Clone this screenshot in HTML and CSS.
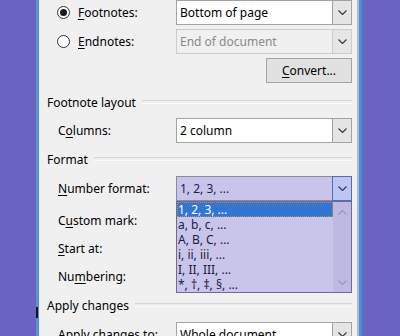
FILE: index.html
```html
<!DOCTYPE html>
<html lang="en">
<head>
  <meta charset="UTF-8">
  <title>Footnote and Endnote</title>
  <link rel="stylesheet" href="styles.css">
</head>
<body>
  <div class="frame">
    <div class="dialog">

      <div class="row">
        <label class="option"><span class="radio checked"></span><u>F</u>ootnotes:</label>
        <div class="select">
          <span class="value">Bottom of page</span>
          <span class="arrow"><svg width="9" height="5" viewBox="0 0 9 5"><polyline points="0.5,0.5 4.5,4.5 8.5,0.5" /></svg></span>
        </div>
      </div>

      <div class="row gap4">
        <label class="option"><span class="radio"></span><u>E</u>ndnotes:</label>
        <div class="select disabled">
          <span class="value">End of document</span>
          <span class="arrow"><svg width="9" height="5" viewBox="0 0 9 5"><polyline points="0.5,0.5 4.5,4.5 8.5,0.5" /></svg></span>
        </div>
      </div>

      <div class="row gap4">
        <button class="btn"><u>C</u>onvert...</button>
      </div>

      <div class="group-title first">Footnote layout</div>

      <div class="row gap7">
        <label>C<u>o</u>lumns:</label>
        <div class="select">
          <span class="value">2 column</span>
          <span class="arrow"><svg width="9" height="5" viewBox="0 0 9 5"><polyline points="0.5,0.5 4.5,4.5 8.5,0.5" /></svg></span>
        </div>
      </div>

      <div class="group-title">Format</div>

      <div class="row gap8">
        <label><u>N</u>umber format:</label>
        <div class="dropdown">
          <div class="select active">
            <span class="value">1, 2, 3, ...</span>
            <span class="arrow"><svg width="9" height="5" viewBox="0 0 9 5"><polyline points="0.5,0.5 4.5,4.5 8.5,0.5" /></svg></span>
          </div>
          <div class="list">
            <div class="items">
              <div class="item sel">1, 2, 3, ...</div>
              <div class="item">a, b, c, ...</div>
              <div class="item">A, B, C, ...</div>
              <div class="item">i, ii, iii, ...</div>
              <div class="item">I, II, III, ...</div>
              <div class="item">*, †, ‡, §, ...</div>
            </div>
            <div class="scroll">
              <svg width="9" height="5" viewBox="0 0 9 5"><polyline points="0.5,4.5 4.5,0.5 8.5,4.5" /></svg>
              <svg width="9" height="5" viewBox="0 0 9 5"><polyline points="0.5,0.5 4.5,4.5 8.5,0.5" /></svg>
            </div>
          </div>
        </div>
      </div>

      <div class="row gap7">
        <label>C<u>u</u>stom mark:</label>
      </div>

      <div class="row gap3">
        <label><u>S</u>tart at:</label>
      </div>

      <div class="row gap3">
        <label>Nu<u>m</u>bering:</label>
      </div>

      <div class="group-title">Apply changes</div>

      <div class="row gap8">
        <label>A<u>p</u>ply changes to:</label>
        <div class="select">
          <span class="value">Whole document</span>
          <span class="arrow"><svg width="9" height="5" viewBox="0 0 9 5"><polyline points="0.5,0.5 4.5,4.5 8.5,0.5" /></svg></span>
        </div>
      </div>

    </div>
  </div>
</body>
</html>
```

FILE: styles.css
```css
:root {
  --fundo: #6b63c1;
  --janela: #f0f0f0;
  --azul: #3d96e2;
  --borda: #a3a3a3;
  --lilas: #c9c5ea;
  --lilas2: #bdb9e1;
}

* {
  box-sizing: border-box;
  margin: 0;
  padding: 0;
}

body {
  background-color: var(--fundo);
  width: 400px;
  height: 336px;
  overflow: hidden;
  font-family: 'Noto Sans', 'DejaVu Sans', sans-serif;
  font-size: 12px;
  color: #000;
}

u {
  text-underline-offset: 2px;
}

.frame {
  position: relative;
  margin-left: 36px;
  width: 326px;
  height: 336px;
  border-left: 1px solid #8e8ba6;
  border-right: 3px solid var(--azul);
}

/* little dark mark on the left edge */
.frame::before {
  content: "";
  position: absolute;
  left: -1px;
  top: 307px;
  width: 2px;
  height: 11px;
  background-color: #151515;
}

.dialog {
  height: 100%;
  background-color: var(--janela);
  border-left: 2px solid var(--azul);
  border-right: 2px solid #b9b9b9;
  padding: 0 5px 0 8px;
}

.row {
  display: flex;
  align-items: center;
  height: 25px;
  padding-left: 11px;
}

.row > label {
  flex: 1;
  white-space: nowrap;
}

.gap3 { margin-top: 3px; }
.gap4 { margin-top: 4px; }
.gap7 { margin-top: 7px; }
.gap8 { margin-top: 8px; }

.option {
  display: flex;
  align-items: center;
}

.radio {
  width: 13px;
  height: 13px;
  margin-left: -1px;
  margin-right: 8px;
  border: 1px solid #333;
  border-radius: 50%;
  background-color: #fff;
  display: flex;
  align-items: center;
  justify-content: center;
}

.radio.checked::after {
  content: "";
  width: 7px;
  height: 7px;
  border-radius: 50%;
  background-color: #1a1a1a;
}

.select {
  display: flex;
  width: 176px;
  height: 25px;
  border: 1px solid var(--borda);
  background-color: #fff;
}

.select .value {
  flex: 1;
  padding-left: 3px;
  line-height: 23px;
  white-space: nowrap;
}

.select .arrow {
  width: 19px;
  border-left: 1px solid var(--borda);
  background-color: #e5e5e5;
  display: flex;
  align-items: center;
  justify-content: center;
}

svg polyline {
  fill: none;
  stroke: #3a3a3a;
  stroke-width: 1.2;
}

.select.disabled {
  background-color: var(--janela);
  border-color: #cccccc;
  color: #8a8a8a;
}

.select.disabled .arrow {
  border-left-color: #cccccc;
  background-color: #e6e6e6;
}

.select.active {
  background-color: var(--lilas);
  border-color: #8985b2;
  color: #1f1f40;
}

.select.active .arrow {
  background-color: #bfc5ee;
  border: 1px solid #3f73c6;
  margin: -1px -1px -1px 0;
  width: 20px;
}

.select.active polyline {
  stroke: #2a3a6a;
}

.btn {
  margin-left: auto;
  width: 86px;
  height: 25px;
  border: 1px solid var(--borda);
  background-color: #e1e1e1;
  font-family: inherit;
  font-size: 12px;
  color: #000;
}

.group-title {
  display: flex;
  align-items: center;
  gap: 6px;
  height: 16px;
  margin-top: 9px;
  line-height: 16px;
  white-space: nowrap;
}

.group-title.first {
  margin-top: 12px;
}

.group-title::after {
  content: "";
  flex: 1;
  height: 2px;
  margin-bottom: 2px;
  border-top: 1px solid #d6d6d6;
  border-bottom: 1px solid #fbfbfb;
}

.dropdown {
  position: relative;
}

.list {
  position: absolute;
  left: 0;
  top: 25px;
  width: 176px;
  height: 92px;
  border: 1px solid #6f6b96;
  background-color: var(--lilas);
  display: flex;
  z-index: 10;
}

.items {
  flex: 1;
}

.item {
  height: 15px;
  line-height: 15px;
  padding-left: 1px;
  color: #1b1b40;
  white-space: nowrap;
}

.item.sel {
  background-color: #3276d3;
  color: #fff;
  outline: 1px dotted #d08a3a;
  outline-offset: -1px;
}

.scroll {
  width: 18px;
  background-color: var(--lilas2);
  display: flex;
  flex-direction: column;
  justify-content: space-between;
  align-items: center;
  padding: 8px 0 7px;
}

.scroll polyline {
  stroke: #9a96c4;
}
```
